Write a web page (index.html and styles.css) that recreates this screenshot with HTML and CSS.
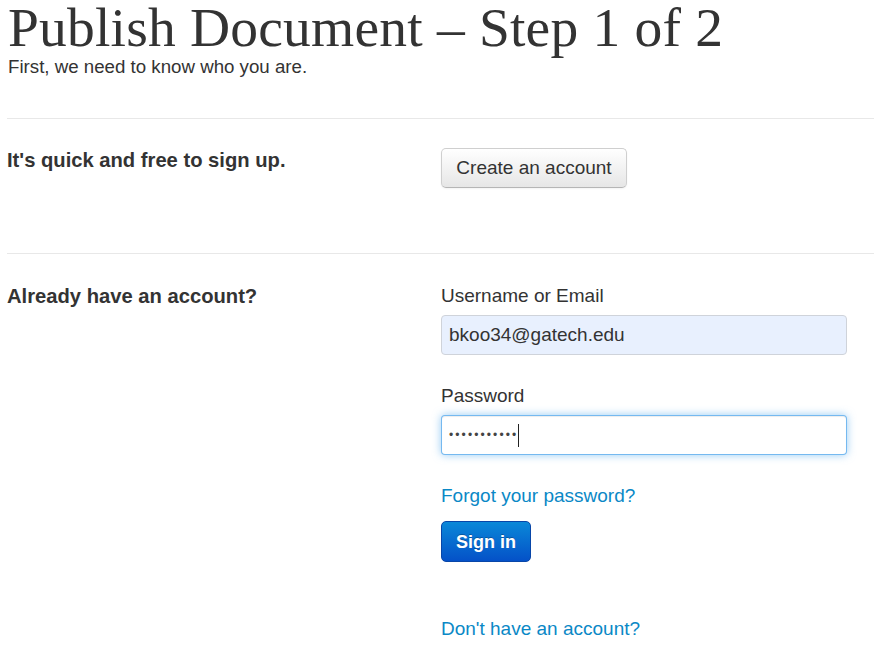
FILE: index.html
```html
<!DOCTYPE html>
<html>
<head>
<meta charset="utf-8">
<link rel="stylesheet" href="styles.css">
</head>
<body>
<div class="page">
  <header class="head">
    <h1 class="title">Publish Document – Step 1 of 2</h1>
    <p class="subtitle">First, we need to know who you are.</p>
  </header>
  <section class="row row-signup">
    <h3 class="row-title">It's quick and free to sign up.</h3>
    <div class="row-body">
      <button class="btn btn-default">Create an account</button>
    </div>
  </section>
  <section class="row row-login">
    <h3 class="row-title">Already have an account?</h3>
    <form class="row-body login-form">
      <label class="field-label">Username or Email</label>
      <input class="field field-autofill" type="text" value="bkoo34@gatech.edu">
      <label class="field-label">Password</label>
      <div class="field field-focus"><span class="dots">•••••••••••</span><span class="caret"></span></div>
      <a class="link forgot" href="#">Forgot your password?</a>
      <button class="btn btn-primary" type="button">Sign in</button>
      <a class="link noacct" href="#">Don't have an account?</a>
    </form>
  </section>
</div>
</body>
</html>
```
FILE: styles.css
```css
html, body {
  margin: 0;
  padding: 0;
  background: #fff;
  overflow: hidden;
}
body {
  font-family: "Liberation Sans", Arial, sans-serif;
  color: #333;
}
.page {
  padding: 0 0 0 7px;
}
.head {
  padding-left: 1px;
  margin-bottom: 40px;
}
.title {
  margin: 0;
  font-family: "Liberation Serif", serif;
  font-weight: normal;
  font-size: 55.5px;
  line-height: 56px;
  color: #333;
  letter-spacing: 0.2px;
  white-space: nowrap;
}
.subtitle {
  margin: 0;
  font-size: 18.7px;
  line-height: 22px;
  color: #333;
}
.row {
  display: grid;
  grid-template-columns: 434px 1fr;
  border-top: 1px solid #e8e8e8;
}
.row-signup {
  padding-top: 29px;
  height: 105px;
}
.row-login {
  padding-top: 30px;
}
.row-title {
  margin: 0;
  font-size: 20.2px;
  font-weight: bold;
  line-height: 24px;
  color: #333;
}
.btn {
  font-family: "Liberation Sans", Arial, sans-serif;
  font-size: 19px;
  line-height: 22px;
  border-radius: 5px;
  cursor: pointer;
}
.btn-default {
  width: 186px;
  height: 40px;
  padding: 0;
  color: #333;
  background: linear-gradient(#ffffff, #e6e6e6);
  border: 1px solid #cfcfcf;
  border-bottom-color: #b5b5b5;
  box-shadow: inset 0 1px 0 rgba(255,255,255,.2), 0 1px 2px rgba(0,0,0,.05);
}
.login-form {
  display: flex;
  flex-direction: column;
  align-items: flex-start;
  margin: 0;
}
.field-label {
  font-size: 19px;
  line-height: 22px;
  margin-top: 1px;
  margin-bottom: 8px;
}
.field {
  box-sizing: border-box;
  width: 406px;
  height: 40px;
  border-radius: 4px;
  font-family: "Liberation Sans", Arial, sans-serif;
  font-size: 19px;
  color: #333;
  padding: 0 7px;
  margin: 0 0 29px;
}
.field-autofill {
  background: #e8f0fe;
  border: 1px solid #cfd3da;
  outline: none;
}
.field-focus {
  display: flex;
  align-items: center;
  background: #fff;
  border: 1px solid rgba(82,168,236,.8);
  box-shadow: inset 0 1px 1px rgba(0,0,0,.075), 0 0 8px rgba(82,168,236,.6);
  margin-bottom: 30px;
}
.dots {
  font-size: 12px;
  letter-spacing: 2.1px;
  color: #444;
}
.caret {
  display: inline-block;
  width: 1px;
  height: 23px;
  background: #222;
  margin-left: 0;
}
.link {
  font-size: 19px;
  line-height: 22px;
  color: #0a88c6;
  text-decoration: none;
}
.forgot {
  margin-bottom: 14px;
}
.btn-primary {
  width: 90px;
  height: 41px;
  padding: 0;
  font-size: 18px;
  font-weight: bold;
  color: #fff;
  background: linear-gradient(#0a88d8, #0451c8);
  border: 1px solid #0846a8;
  border-radius: 5px;
  text-shadow: 0 -1px 0 rgba(0,0,0,.25);
  margin-bottom: 56px;
}
```
